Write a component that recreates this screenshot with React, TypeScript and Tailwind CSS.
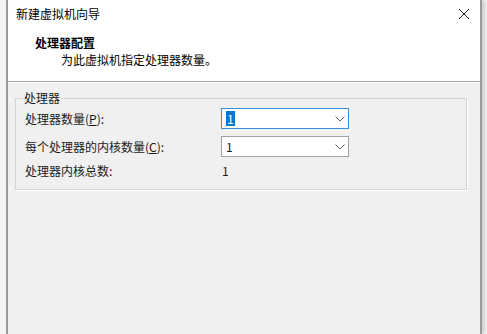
const font = "font-['Microsoft_YaHei_UI','Noto_Sans_CJK_SC',sans-serif]";

const Chevron = () => (
  <svg width="10" height="6" viewBox="0 0 10 6" className="text-[#606060]">
    <path d="M0.5 0.5 L5 5 L9.5 0.5" fill="none" stroke="currentColor" strokeWidth="1" />
  </svg>
);

const Combo: React.FC<{ value: string; focused?: boolean }> = ({ value, focused }) => (
  <div
    className={`w-[128px] h-[21px] flex items-center justify-between pl-[4px] pr-[3px] bg-white border ${
      focused ? "border-[#3c8fd6]" : "border-[#a0a0a0]"
    }`}
  >
    {focused ? (
      <span className="bg-[#0078d7] text-white leading-[15px] px-[1px]">{value}</span>
    ) : (
      <span className="leading-[15px]">{value}</span>
    )}
    <Chevron />
  </div>
);

const App = () => {
  return (
    <div className={`w-[487px] h-[334px] bg-[#f4f4f4] overflow-hidden ${font} text-[12px] text-[#1a1a1a]`}>
      <div className="ml-[6px] w-[476px] h-[334px] flex flex-col border-l-2 border-r-2 border-[#9a9a9a] bg-[#f0f0f0] shadow-[3px_0_3px_rgba(0,0,0,0.15)]">
        {/* title bar */}
        <div className="h-[27px] bg-white flex items-center justify-between pl-[8px] pr-[10px]">
          <span className="text-[12px] text-black">新建虚拟机向导</span>
          <svg width="12" height="12" viewBox="0 0 12 12">
            <path d="M1 1 L11 11 M11 1 L1 11" stroke="#222" strokeWidth="1" />
          </svg>
        </div>
        {/* header */}
        <div className="h-[55px] bg-white border-b border-[#a0a0a0] pl-[27px] pt-[7px]">
          <div className="font-bold text-black leading-[17px]">处理器配置</div>
          <div className="pl-[26px] leading-[17px] text-black">为此虚拟机指定处理器数量。</div>
        </div>
        <div className="h-[1px] bg-[#ffffff]" />
        {/* body */}
        <div className="px-[7px] pt-[15px]">
          <div className="relative w-[452px] h-[92px] border border-[#d5d5d5] shadow-[1px_1px_0_#ffffff]">
            <span className="absolute left-[7px] -top-[9px] bg-[#f0f0f0] px-[1px] leading-[16px]">处理器</span>
            <div className="pt-[9px] pl-[9px] flex flex-col gap-[7px]">
              <div className="flex items-center">
                <span className="w-[196px]">
                  处理器数量(<span className="underline">P</span>):
                </span>
                <Combo value="1" focused />
              </div>
              <div className="flex items-center">
                <span className="w-[196px]">
                  每个处理器的内核数量(<span className="underline">C</span>):
                </span>
                <Combo value="1" />
              </div>
              <div className="flex items-center -mt-[2px]">
                <span className="w-[197px]">处理器内核总数:</span>
                <span>1</span>
              </div>
            </div>
          </div>
        </div>
      </div>
    </div>
  );
};

export default App;
